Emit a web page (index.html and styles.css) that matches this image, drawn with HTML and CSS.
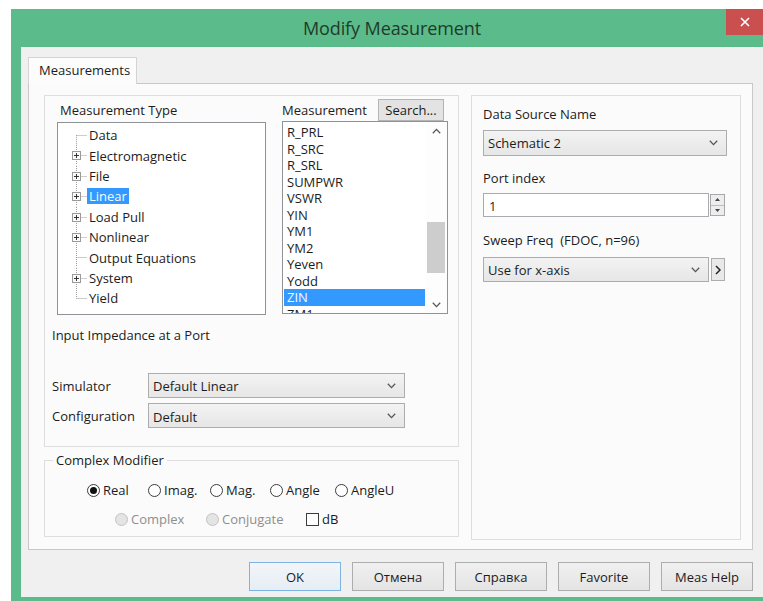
FILE: index.html
```html
<!DOCTYPE html>
<html lang="en">
<head>
<meta charset="utf-8">
<title>Modify Measurement</title>
<link rel="stylesheet" href="styles.css">
</head>
<body>
<svg class="defs" width="0" height="0" aria-hidden="true">
  <defs>
    <symbol id="node-first" viewBox="0 0 29 20.4">
      <line x1="18.5" y1="10.2" x2="18.5" y2="20.4" class="dot"/>
      <line x1="18.5" y1="10.5" x2="29" y2="10.5" class="dot"/>
    </symbol>
    <symbol id="node-leaf" viewBox="0 0 29 20.4">
      <line x1="18.5" y1="0" x2="18.5" y2="20.4" class="dot"/>
      <line x1="18.5" y1="10.5" x2="29" y2="10.5" class="dot"/>
    </symbol>
    <symbol id="node-last" viewBox="0 0 29 20.4">
      <line x1="18.5" y1="0" x2="18.5" y2="10.5" class="dot"/>
      <line x1="18.5" y1="10.5" x2="29" y2="10.5" class="dot"/>
    </symbol>
    <symbol id="node-exp" viewBox="0 0 29 20.4">
      <line x1="18.5" y1="0" x2="18.5" y2="20.4" class="dot"/>
      <line x1="22.5" y1="10.5" x2="29" y2="10.5" class="dot"/>
      <rect x="14.5" y="6.5" width="8" height="8" fill="#fafafa" stroke="#9a9a9a"/>
      <line x1="16" y1="10.5" x2="21" y2="10.5" stroke="#333"/>
      <line x1="18.5" y1="8" x2="18.5" y2="13" stroke="#333"/>
    </symbol>
    <symbol id="chev" viewBox="0 0 9 6">
      <polyline points="0.8,0.8 4.5,4.6 8.2,0.8" fill="none" stroke="#555" stroke-width="1.3"/>
    </symbol>
  </defs>
</svg>

<div class="window">
  <div class="titlebar">
    <span></span>
    <h1 class="title">Modify Measurement</h1>
    <button class="close" type="button" aria-label="Close">
      <svg width="10" height="10" viewBox="0 0 10 10"><path d="M1 1 L9 9 M9 1 L1 9" stroke="#fff" stroke-width="1.6"/></svg>
    </button>
  </div>

  <div class="client">
    <div class="tabs"><div class="tab">Measurements</div></div>

    <div class="pane">
      <div class="leftcol">
        <div class="group main">
          <div class="pickers">
            <div class="typecol">
              <div class="hdr"><span class="hdr-label">Measurement Type</span></div>
              <div class="tree">
                <div class="node"><svg class="gut"><use href="#node-first"/></svg><span class="txt">Data</span></div>
                <div class="node"><svg class="gut"><use href="#node-exp"/></svg><span class="txt">Electromagnetic</span></div>
                <div class="node"><svg class="gut"><use href="#node-exp"/></svg><span class="txt">File</span></div>
                <div class="node"><svg class="gut"><use href="#node-exp"/></svg><span class="txt sel">Linear</span></div>
                <div class="node"><svg class="gut"><use href="#node-exp"/></svg><span class="txt">Load Pull</span></div>
                <div class="node"><svg class="gut"><use href="#node-exp"/></svg><span class="txt">Nonlinear</span></div>
                <div class="node"><svg class="gut"><use href="#node-leaf"/></svg><span class="txt">Output Equations</span></div>
                <div class="node"><svg class="gut"><use href="#node-exp"/></svg><span class="txt">System</span></div>
                <div class="node"><svg class="gut"><use href="#node-last"/></svg><span class="txt">Yield</span></div>
              </div>
            </div>
            <div class="meascol">
              <div class="hdr"><span>Measurement</span><button class="search" type="button">Search...</button></div>
              <div class="list">
                <div class="items">
                  <div class="item">R_PRL</div>
                  <div class="item">R_SRC</div>
                  <div class="item">R_SRL</div>
                  <div class="item">SUMPWR</div>
                  <div class="item">VSWR</div>
                  <div class="item">YIN</div>
                  <div class="item">YM1</div>
                  <div class="item">YM2</div>
                  <div class="item">Yeven</div>
                  <div class="item">Yodd</div>
                  <div class="item sel">ZIN</div>
                  <div class="item">ZM1</div>
                </div>
                <div class="vscroll">
                  <div class="arrow"><svg width="9" height="6"><use href="#chev" transform="rotate(180 4.5 3)"/></svg></div>
                  <div class="track"><div class="thumb"></div></div>
                  <div class="arrow"><svg width="9" height="6"><use href="#chev"/></svg></div>
                </div>
              </div>
            </div>
          </div>

          <p class="desc">Input Impedance at a Port</p>

          <div class="form">
            <span class="flabel">Simulator</span>
            <div class="combo sim"><span>Default Linear</span><svg width="9" height="6"><use href="#chev"/></svg></div>
            <span class="flabel">Configuration</span>
            <div class="combo sim cfg"><span>Default</span><svg width="9" height="6"><use href="#chev"/></svg></div>
          </div>
        </div>

        <fieldset class="group modifier">
          <legend>Complex Modifier</legend>
          <div class="radios row1">
            <label class="opt"><span class="radio on"></span>Real</label>
            <label class="opt"><span class="radio"></span>Imag.</label>
            <label class="opt"><span class="radio"></span>Mag.</label>
            <label class="opt"><span class="radio"></span>Angle</label>
            <label class="opt"><span class="radio"></span>AngleU</label>
          </div>
          <div class="radios row2">
            <label class="opt off"><span class="radio"></span>Complex</label>
            <label class="opt off"><span class="radio"></span>Conjugate</label>
            <label class="opt"><span class="check"></span>dB</label>
          </div>
        </fieldset>
      </div>

      <div class="group right">
        <div class="rlabel first">Data Source Name</div>
        <div class="combo wide"><span>Schematic 2</span><svg width="9" height="6"><use href="#chev"/></svg></div>

        <div class="rlabel">Port index</div>
        <div class="spinrow">
          <div class="edit">1</div>
          <div class="spin">
            <span class="half"><svg width="5" height="3"><path d="M0 3 L2.5 0 L5 3 Z" fill="#444"/></svg></span>
            <span class="half"><svg width="5" height="3"><path d="M0 0 L2.5 3 L5 0 Z" fill="#444"/></svg></span>
          </div>
        </div>

        <div class="rlabel sweep">Sweep Freq&nbsp; (FDOC, n=96)</div>
        <div class="sweeprow">
          <div class="combo narrow"><span>Use for x-axis</span><svg width="9" height="6"><use href="#chev"/></svg></div>
          <button class="more" type="button">
            <svg width="6" height="10" viewBox="0 0 6 10"><polyline points="1,1 5,5 1,9" fill="none" stroke="#222" stroke-width="1.5"/></svg>
          </button>
        </div>
      </div>
    </div>

    <div class="buttons">
      <button class="btn default" type="button">OK</button>
      <button class="btn" type="button">Отмена</button>
      <button class="btn" type="button">Справка</button>
      <button class="btn" type="button">Favorite</button>
      <button class="btn" type="button">Meas Help</button>
    </div>
  </div>
</div>
</body>
</html>
```

FILE: styles.css
```css
* { box-sizing: border-box; }

html, body {
  margin: 0;
  background: #ffffff;
  overflow: hidden;
}

body {
  font-family: "Open Sans", "Noto Sans", sans-serif;
  font-size: 13px;
  color: #1c1c1c;
}

.defs { position: absolute; width: 0; height: 0; }

.dot {
  stroke: #9a9a9a;
  stroke-width: 1;
  stroke-dasharray: 1 1;
}

/* window frame */
.window {
  margin: 9px 0 0 11px;
  height: 592px;
  background: #5cbb8a;
  padding: 0 0 4px 10px;
  display: flex;
  flex-direction: column;
}

.titlebar {
  height: 38px;
  display: grid;
  grid-template-columns: 1fr auto 1fr;
  align-items: center;
}

.title {
  margin: 0;
  font-weight: 400;
  font-size: 18px;
  color: #1f3b2a;
  letter-spacing: -0.1px;
}

.close {
  justify-self: end;
  align-self: start;
  width: 37px;
  height: 26px;
  border: none;
  padding: 0;
  background: #c9504f;
  display: flex;
  align-items: center;
  justify-content: center;
}

.client {
  flex: 1;
  background: #f0f0f0;
  padding: 10px 10px 0 7px;
  display: flex;
  flex-direction: column;
}

/* tab strip */
.tabs { display: flex; height: 26px; }

.tab {
  width: 109px;
  height: 27px;
  background: #fcfcfc;
  border: 1px solid #d4d4d4;
  border-bottom: none;
  padding: 3px 0 0 10px;
  position: relative;
  z-index: 1;
}

.pane {
  height: 467px;
  background: #fbfbfb;
  border: 1px solid #c8c8c8;
  padding: 11px 11px 9px 15px;
  display: flex;
  gap: 12px;
}

.group {
  border: 1px solid #dedede;
  margin: 0;
}

.leftcol {
  width: 415px;
  display: flex;
  flex-direction: column;
}

/* measurement type / measurement pickers */
.main {
  height: 352px;
  padding: 3px 10px 0 7px;
}

.pickers {
  display: flex;
  gap: 16px;
  margin-left: 5px;
}

.typecol { width: 209px; }
.meascol { width: 166px; }

.hdr {
  height: 22px;
  display: flex;
  align-items: center;
}

.hdr-label { padding-left: 3px; }

.typecol .hdr { margin-bottom: 1px; }

.search {
  margin-left: auto;
  margin-right: 4px;
  height: 22px;
  width: 66px;
  padding: 0;
  font: inherit;
  color: #1c1c1c;
  background: #e3e3e3;
  border: 1px solid #b4b4b4;
}

.tree {
  height: 193px;
  background: #fff;
  border: 1px solid #8f9297;
  padding-top: 2px;
  overflow: hidden;
}

.node {
  height: 20.4px;
  display: flex;
  align-items: center;
}

.gut {
  width: 29px;
  height: 20.4px;
  flex: none;
}

.txt {
  padding: 0 2px;
  line-height: 16px;
}

.txt.sel {
  background: #3399ff;
  color: #f4f9ff;
}

.list {
  height: 193px;
  background: #fff;
  border: 1px solid #8f9297;
  display: flex;
  overflow: hidden;
}

.items {
  width: 143px;
  padding: 2px 1px 0 1px;
  overflow: hidden;
}

.item {
  height: 16.5px;
  line-height: 16.5px;
  padding-left: 3px;
  white-space: nowrap;
}

.item.sel {
  background: #3399ff;
  color: #f4f9ff;
}

.vscroll {
  width: 21px;
  display: flex;
  flex-direction: column;
  background: #fdfdfd;
}

.arrow {
  height: 17px;
  display: flex;
  align-items: center;
  justify-content: center;
}

.track { flex: 1; padding: 83px 2px 0 1px; }

.thumb {
  height: 51px;
  background: #cdcdcd;
}

.desc {
  margin: 12px 0 0;
  line-height: 16px;
}

/* simulator / configuration */
.form {
  margin-top: 30px;
  display: grid;
  grid-template-columns: 96px 257px;
  row-gap: 5px;
  align-items: center;
}

.combo {
  height: 25px;
  background: linear-gradient(#f3f3f3, #e6e6e6);
  border: 1px solid #adadad;
  display: flex;
  align-items: center;
  justify-content: space-between;
  padding: 0 8px 0 4px;
}

.cfg span { padding-top: 3px; }

/* complex modifier */
.modifier {
  margin-top: 5px;
  height: 85px;
  padding: 13px 0 0 0;
}

.modifier legend {
  margin-left: 8px;
  padding: 0 3px;
  line-height: 16px;
}

.radios {
  display: grid;
  height: 18px;
  align-items: center;
}

.row1 {
  margin-left: 42px;
  grid-template-columns: 61px 62px 60px 65px auto;
}

.row2 {
  margin: 11px 0 0 70px;
  grid-template-columns: 91px 100px auto;
}

.opt {
  display: flex;
  align-items: center;
  gap: 3px;
  white-space: nowrap;
}

.opt.off { color: #8e8e8e; }
.opt.off .radio { background: #e4e4e4; border-color: #c2c2c2; }

.radio {
  width: 13px;
  height: 13px;
  border-radius: 50%;
  border: 1px solid #3c3c3c;
  background: #fff;
  display: flex;
  align-items: center;
  justify-content: center;
}

.radio.on::after {
  content: "";
  width: 7px;
  height: 7px;
  border-radius: 50%;
  background: #111;
}

.check {
  width: 13px;
  height: 13px;
  border: 1px solid #3c3c3c;
  background: #fff;
}

/* data source panel */
.right {
  width: 270px;
  padding: 10px 0 0 11px;
}

.rlabel {
  line-height: 16px;
  margin: 14px 0 7px;
}

.rlabel.first { margin: 0 0 8px; }
.rlabel.sweep { margin: 15px 0 9px; }

.combo.wide { width: 244px; height: 26px; }

.spinrow {
  display: flex;
  gap: 1px;
  width: 242px;
  height: 24px;
}

.edit {
  width: 226px;
  background: #fff;
  border: 1px solid #a9abb0;
  padding: 3px 0 0 5px;
}

.spin {
  width: 15px;
  height: 22px;
  margin-top: 1px;
  display: flex;
  flex-direction: column;
  border: 1px solid #a9a9a9;
  background: #ededed;
}

.half {
  flex: 1;
  display: flex;
  align-items: center;
  justify-content: center;
}

.half + .half { border-top: 1px solid #bdbdbd; }

.sweeprow {
  display: flex;
  gap: 2px;
  align-items: center;
}

.combo.narrow { width: 226px; }

.more {
  width: 14px;
  height: 23px;
  padding: 0;
  border: 1px solid #adadad;
  background: #e9e9e9;
  display: flex;
  align-items: center;
  justify-content: center;
}

/* dialog buttons */
.buttons {
  margin-top: 12px;
  display: flex;
  justify-content: flex-end;
  gap: 11px;
}

.btn {
  width: 92px;
  height: 29px;
  padding: 0;
  font: inherit;
  color: #1c1c1c;
  background: linear-gradient(#f0f0f0, #e4e4e4);
  border: 1px solid #adadad;
}

.btn.default {
  border-color: #7fb3e2;
  background: linear-gradient(#f2f6fa, #e6edf4);
}
```
